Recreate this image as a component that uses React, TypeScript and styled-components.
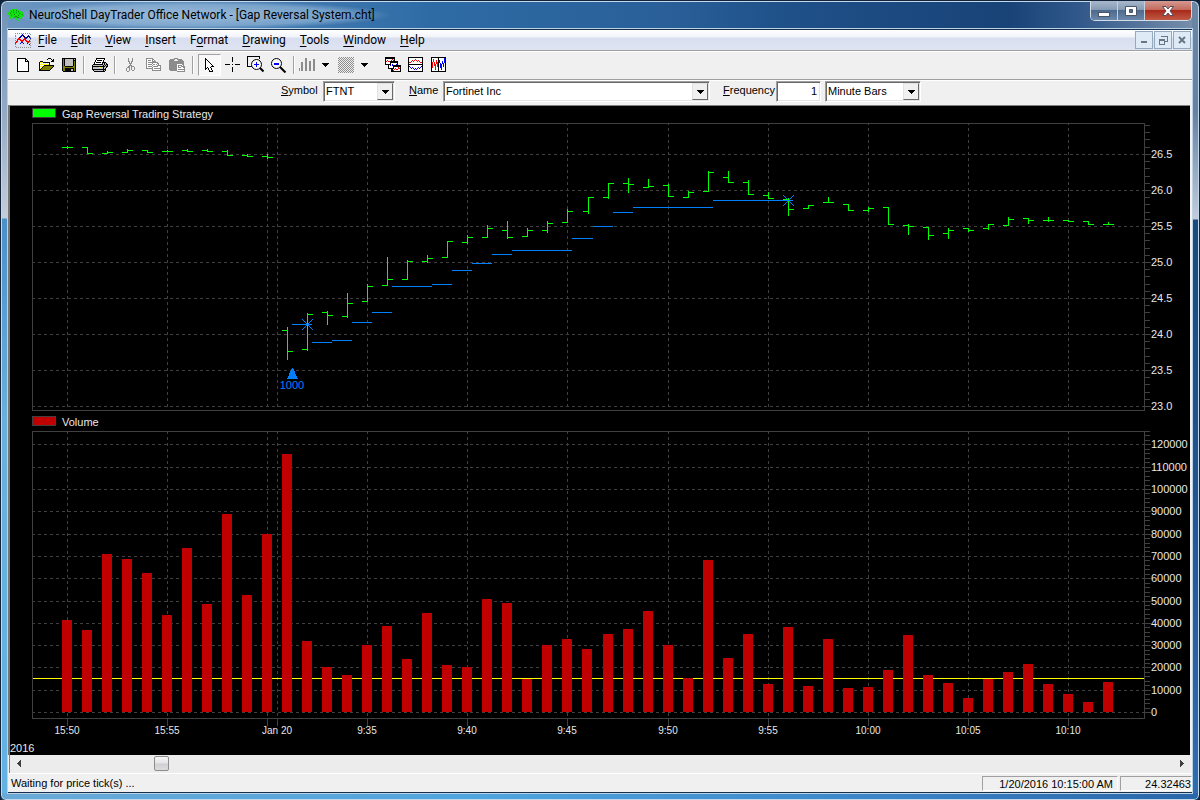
import React from "react";
import styled, { createGlobalStyle } from "styled-components";

const GlobalStyle = createGlobalStyle`
  * { box-sizing: border-box; }
  body { margin: 0; background: #10233c; font-family: "Liberation Sans", Arial, sans-serif; font-size: 11px; color: #000; }
  button, input, select { font: inherit; color: inherit; margin: 0; }
`;

/* ---------- window chrome ---------- */

const Frame = styled.div`
  min-height: 100vh;
  display: flex;
  flex-direction: column;
  padding: 0 7px 7px;
  border: 1px solid #14253b;
  border-radius: 7px 7px 6px 6px;
  box-shadow: inset 0 0 0 1px #c3d8ea;
  background:
    linear-gradient(90deg, #6aa9d6, #4fa5de 40%, #3a83c6 75%, #2a66a8) bottom / 100% 7px no-repeat,
    linear-gradient(180deg, #6f92b8 0, #93aac4 110px, #c3cdda 217px, #4a90c8 218px, #6ab0dc 420px, #62b2e2) left / 7px 100% no-repeat,
    linear-gradient(180deg, #6c86a5 0, #6580a2 110px, #c3cbd9 218px, #1b4a80 219px, #225390 480px, #2f6db0) right / 7px 100% no-repeat,
    linear-gradient(90deg, #6b96c0, #4a7fb4 20%, #2e6ba5 36%, #2a6099 55%, #1f5088 66%, #184377 84%, #31588a 90%, #7b91ac);
`;

const TitleBar = styled.header`
  display: flex;
  align-items: flex-start;
  justify-content: space-between;
  height: 28px;
`;

const TitleText = styled.div`
  display: flex;
  align-items: center;
  gap: 5px;
  height: 28px;
  padding-right: 16px;
  font: 12px/18px Roboto, "Noto Sans", sans-serif;
  background: radial-gradient(closest-side, rgba(205, 224, 240, 0.6), rgba(180, 208, 232, 0.45) 75%, rgba(180, 208, 232, 0));
`;

const CaptionButtons = styled.div`
  display: flex;
  height: 20px;
  border: 1px solid #d3dde8;
  border-top: 0;
  border-radius: 0 0 5px 5px;
  overflow: hidden;
`;

const CaptionButton = styled.button<{ $close?: boolean }>`
  display: flex;
  align-items: center;
  justify-content: center;
  width: ${(p) => (p.$close ? 46 : 27)}px;
  padding: 0;
  border: 0;
  border-right: ${(p) => (p.$close ? 0 : 1)}px solid #c4d0de;
  background: ${(p) =>
    p.$close
      ? "linear-gradient(#d49a90, #c4685a 48%, #a92a1c 50%, #c05a44)"
      : "linear-gradient(#a9b9cc, #8399b3 48%, #4e6a8c 50%, #6a86a8)"};
`;

const Client = styled.div`
  flex: 1;
  display: flex;
  flex-direction: column;
  border: 1px solid #16304e;
  border-width: 1px 0 1px 0;
  box-shadow: 0 0 0 1px #b9d2e6;
  background: #f0f0f0;
`;

/* ---------- menu ---------- */

const MenuBar = styled.nav`
  display: flex;
  align-items: center;
  height: 21px;
  padding: 0 1px 0 7px;
  border-bottom: 1px solid #a0a0a0;
  background: linear-gradient(#fff, #f1f4fa 35%, #d9def0 40%, #dfe4f3);
  font: 12px/18px Roboto, "Noto Sans", sans-serif;
`;

const MenuItem = styled.button`
  padding: 0 7px;
  border: 0;
  background: none;
  text-underline-offset: 2px;
`;

const MdiButtons = styled.div`
  display: flex;
  gap: 1px;
  margin-left: auto;
`;

const MdiButton = styled.button`
  display: flex;
  align-items: center;
  justify-content: center;
  width: 18px;
  height: 18px;
  padding: 0;
  border: 1px solid #94a9bd;
  background: #deebf7;
`;

/* ---------- toolbar ---------- */

const ToolBar = styled.div`
  display: flex;
  align-items: center;
  height: 29px;
  padding: 0 0 2px 3px;
  border-top: 1px solid #fff;
  border-bottom: 1px solid #a0a0a0;
`;

const ToolButton = styled.button<{ $pressed?: boolean; $width?: number }>`
  display: flex;
  align-items: center;
  justify-content: center;
  width: ${(p) => p.$width ?? 23}px;
  height: 22px;
  padding: 0;
  border: 1px solid transparent;
  border-color: ${(p) => (p.$pressed ? "#a0a0a0 #fff #fff #a0a0a0" : "transparent")};
  background: ${(p) => (p.$pressed ? "#f8f8f8" : "none")};
`;

const Separator = styled.span<{ $wide?: boolean }>`
  width: 2px;
  height: 18px;
  margin: 0 ${(p) => (p.$wide ? 4 : 3)}px;
  border-left: 1px solid #a0a0a0;
  border-right: 1px solid #fff;
`;

const Gap = styled.span`
  width: 10px;
`;

/* ---------- chart parameters ---------- */

const ParamBar = styled.form`
  display: flex;
  align-items: flex-start;
  height: 25px;
  padding-left: 273px;
  border-top: 1px solid #fff;
`;

const ParamLabel = styled.label<{ $width: number }>`
  width: ${(p) => p.$width}px;
  line-height: 19px;
  white-space: nowrap;
`;

const sunken = `
  border: 1px solid;
  border-color: #a0a0a0 #fff #fff #a0a0a0;
  box-shadow: inset 1px 1px 0 #696969, inset -1px -1px 0 #e3e3e3;
  background: #fff;
`;

const Combo = styled.span<{ $width: number; $after: number }>`
  position: relative;
  width: ${(p) => p.$width}px;
  height: 21px;
  margin-right: ${(p) => p.$after}px;
`;

const ComboSelect = styled.select`
  display: block;
  width: 100%;
  height: 100%;
  padding: 0 18px 2px 2px;
  appearance: none;
  border-radius: 0;
  outline: 0;
  ${sunken}
`;

const ComboArrow = styled.span`
  position: absolute;
  top: 2px;
  right: 2px;
  bottom: 2px;
  width: 16px;
  display: flex;
  align-items: center;
  justify-content: center;
  border: 1px solid;
  border-color: #e3e3e3 #696969 #696969 #e3e3e3;
  background: #f0f0f0;
  pointer-events: none;
`;

const NumberBox = styled.input`
  width: 45px;
  height: 21px;
  margin-right: 4px;
  padding: 0 3px 2px;
  text-align: right;
  border-radius: 0;
  outline: 0;
  ${sunken}
`;

/* ---------- chart ---------- */

const ChartArea = styled.main`
  flex: 1;
  border: solid #808080;
  border-width: 1px 0 0 2px;
  border-left-color: #767676;
  margin-right: 2px;
  background: #000;
  color: #e8e8e8;
`;

const Legend = styled.div`
  display: flex;
  align-items: center;
  gap: 6px;
  height: 14px;
  padding-left: 22px;
  line-height: 14px;
`;

const LegendText = styled.span`
  padding-top: 2px;
`;

const Swatch = styled.span<{ $color: string }>`
  width: 24px;
  height: 10px;
  border: 1px solid #404040;
  background: ${(p) => p.$color};
`;

const Plot = styled.svg`
  display: block;
  width: 100%;
  height: auto;
  font-family: "Liberation Sans", Arial, sans-serif;
  font-size: 11px;
`;

const YearRow = styled.div`
  height: 13px;
  line-height: 13px;
`;

/* ---------- bottom ---------- */

const ScrollBar = styled.div`
  display: flex;
  height: 18px;
  margin: 0 2px 0 1px;
  border-left: 1px solid #808080;
  background: #ececec;
`;

const ScrollButton = styled.button`
  display: flex;
  align-items: center;
  justify-content: center;
  width: 17px;
  height: 17px;
  padding: 0;
  border: 0;
  background: none;
`;

const ScrollRange = styled.input`
  flex: 1;
  min-width: 0;
  height: 17px;
  appearance: none;
  background: none;
  &::-webkit-slider-thumb {
    appearance: none;
    width: 15px;
    height: 15px;
    border: 1px solid #8c8c8c;
    border-radius: 2px;
    background: linear-gradient(#f6f6f6, #e4e4e6 48%, #cfd0d3 52%, #dcdcde);
  }
`;

const StatusBar = styled.footer`
  display: flex;
  align-items: center;
  height: 19px;
  padding-left: 3px;
  border-top: 1px solid #fff;
  line-height: 14px;
`;

const StatusMessage = styled.span`
  flex: 1;
`;

const StatusCell = styled.span<{ $width: number; $after: number; $pad: number }>`
  width: ${(p) => p.$width}px;
  height: 15px;
  margin-right: ${(p) => p.$after}px;
  padding-right: ${(p) => p.$pad}px;
  text-align: right;
  overflow: hidden;
  border: 1px solid;
  border-color: #a0a0a0 #fff #fff #a0a0a0;
`;

/* ---------- icons ---------- */

const INK: Record<string, string> = {
  K: "#000", W: "#fff", Y: "#ffff00", o: "#808000", G: "#c0c0c0", g: "#8c8c8c",
  R: "#ff0000", B: "#0000ff", N: "#000080", L: "#12e012", D: "#0a8a0a", d: "#404040",
};

/** Draws a small bitmap: one character per pixel, "." is transparent. */
const PixelIcon = ({ rows }: { rows: string[] }) => {
  const w = Math.max(...rows.map((r) => r.length));
  return (
    <svg width={w} height={rows.length} viewBox={`0 0 ${w} ${rows.length}`} shapeRendering="crispEdges" aria-hidden="true">
      {rows.flatMap((r, y) =>
        [...r].map((c, x) => (INK[c] ? <rect key={`${x}-${y}`} x={x} y={y} width="1" height="1" fill={INK[c]} /> : null)),
      )}
    </svg>
  );
};

const repeat = (row: string, n: number) => Array.from({ length: n }, () => row);

const NEW = ["KKKKKKKKK...", "KWWWWWWWKK..", "KWWWWWWWKWK.", "KWWWWWWWKKKK", ...repeat("KWWWWWWWWWWK", 9), "KKKKKKKKKKKK"];
const OPEN = [
  "..........KKK...", ".........K...K.K", "..............KK", "..KKK........KKK", ".KYWYKKKKKKK....", ".KWYWYWYWYWK....",
  ".KYWYWYWYWYK....", ".KWYWYKKKKKKKKKK", ".KYWYKoooooooooK", ".KWYKoooooooooK.", ".KYKoooooooooK..", ".KKoooooooooK...", ".KKKKKKKKKKK....",
];
const SAVE = [
  "KKKKKKKKKKKKKK", "KoKGGGGGGGGKGK", "KoKGGGGGGGGKKK", ...repeat("KoKGGGGGGGGKoK", 5), "KooKKKKKKKKooK", "KooooooooooooK",
  "KooKKKKKKKKKoK", ...repeat("KooKKKKKKGGKoK", 2), ".KKKKKKKKKKKKK",
];
const PRINT = [
  "....KKKKKKKKK...", "....KWWWWWWWK...", "...KWKKKKKWK....", "...KWWWWWWWK....", "..KWKKKKKWKKKK..", "..KWWWWWWWKGKGK.",
  ".KKKKKKKKKKGKGKK", "KGGGGGGGGGGKGKGK", "KKKKKKKKKKKKKGKK", "KGGGGGGYYYGKGGK.", "KGGGGGGGGGGKGK..", "KKKKKKKKKKKKKK..", ".KGGGGGGGGGKGK..", "..KKKKKKKKKKK...",
];
const CUT = [
  "..g...g...", "..g...g...", "..g...g...", "..gg.gg...", "...g.g....", "...ggg....", "....g.....", "...ggg....",
  "..gg.ggg..", ".ggg.g..g.", "g..g.g..g.", "g..g.g..g.", "g..g..gg..", ".gg.......",
];
const COPY = [
  "ggggggg.........", "gWWWWWgg........", "gWgggWgWg.......", "gWWWWWgggg......", "gWgggggggggg....", "gWWWWWgWWWWgg...", "gWggggWggWgWg...", "gWWWWWgWWWWgggg.",
  "gWggggWgggggWWg.", "gWWWWWgWWWWWWWg.", "gggggggWggggggg.", "......gWWWWWWWg.", "......ggggggggg.",
];
const PASTE = [
  ".....gggg.......", ".ggggg..ggggg...", "ggggg....ggggg..", "ggggggggggggggg.", "ggggggggggggggg.", "ggggggggggggggg.", "ggggggggWWWWWgg.", "ggggggggWggggWg.",
  "ggggggggWgWWgggg", "ggggggggWgggWWgg", "ggggggggWWWWWWWg", "ggggggggWggggggg", ".gggggggWWWWWWWg", "........gggggggg",
];
const POINTER = [
  "K........", "KK.......", "KWK......", "KWWK.....", "KWWWK....", "KWWWWK...", "KWWWWWK..", "KWWWWWWK.", "KWWWWWKKK", "KWKWWK...",
  "KK.KWWK..", "K..KWWK..", "....KWWK.", "....KKKK.",
];
const CROSS = [
  ...repeat(".......K.......", 5), ...repeat("...............", 2), "KKKKK..K..KKKKK", ...repeat("...............", 2), ...repeat(".......K.......", 5),
];
const BARS = [
  "......gg........", "......gg......gg", "......gg......gg", "......gg..gg..gg", "..gg..gg..gg..gg", "..gg..gg..gg..gg", "..gg..gg..gg..gg",
  "..gg..gg..gg..gg", "..gg..gg..gg..gg", "..gg..gg..gg..gg", "g.gg..gg..gg..gg", "g.gg..gg..gg..gg", "g.gg..gg..gg..gg",
];
const HATCH = Array.from({ length: 16 }, (_, i) => (i % 2 ? "g.g.g.g.g.g.g.g." : ".g.g.g.g.g.g.g.g"));
const ARROW = ["KKKKKKK", ".KKKKK.", "..KKK..", "...K..."];
const CASCADE = [
  "KKKKKKKKKK......", "KKKKKKKKKK......", "KWWWWWWRWK......", "KWRWWWRWRK......", "KRWRRKKKKKKKK...", "KWWWWKKKKKKKK...", "KWWWWKWWWWWWK...", "KKKKKKWBWWWBK...",
  "...KWBWBKKKKKKKK", "...KWWWWKKKKKKKK", "...KWWWWKWWWWRWK", "...KKKKKKWRWWRRK", "......KKWRWRRWWK", "......KKRWWWWWWK", "......KKKKKKKKKK",
];
const SPLIT_H = [
  "KKKKKKKKKKKKKKK", "KWWWWWWWWWWWWWK", "KWWWWWWRWWWWWWK", "KWWWRWRWRWRWWWK", "KWWRWRWWWRWRWWK", "KRRWWWWWWWWWRRK", "KWWWWWWWWWWWWWK", "KKKKKKKKKKKKKKK",
  "KWWWWWWWWWWWWWK", "KBWWWWWWWWWWWBK", "KWBWBWWWWWBWBWK", "KWWBWBWBWBWBWWK", "KWWWWWBWBWWWWWK", "KWWWWWWWWWWWWWK", "KKKKKKKKKKKKKKK",
];
const SPLIT_V = [
  "KKKKKKKKKKKKKKK", "KWWWWWWKWWWWWBK", "KWRWWWWKWWWWWBK", "KWRWWRWKBWWWWBK", "KWRWWRWKBWWBWBK", "KRWRWRRKBWWBWBK", "KRWRWRRKWBWBBWK", "KRWRRWRKWBBWBWK",
  "KRWRRWRKWBBWBWK", "KRWWRWRKWBBWBWK", "KRWWRWWKWBBWWWK", "KWWWRWWKWWBWWWK", "KWWWRWWKWWBWWWK", "KWWWWWWKWWWWWWK", "KKKKKKKKKKKKKKK",
];
const CHART_DOC = [
  "g.g.g.g.g.g.g.g.", ".......B.......g", "g.....BNB....N..", "g....BN.BN..NNN.", "....BN...NBNB.Bg", "g..RR....RNB...B", "..RRRR..RRR....g", "g.R..RRRR.RR..R.",
  ".RR...RR...RRRRg", "RR....BB....RR..", "R....B..B...B..g", "g.............B.", "...............g", "g...............", ".g.g.g.g.g.g.g.g",
];
const BRAIN = [
  "....LLLLLL......", "..LLLDLLDLLL....", ".LLDLLLLLLDLLL..", "LLLLLDLLDLLLLLL.", "LLDLLLLLLLLDLLL.", "LLLLLLDLLLLLLLDL", ".LLDLLLLLLDLLLLL", "..LLLLLDDLLLLLL.",
  "..LLL.DLLDDLLL..", "..LL...LLL.LLL..", "........LL......", ".........LL.....",
];
const LEFT = ["...d", "..dd", ".ddd", "dddd", ".ddd", "..dd", "...d"];
const RIGHT = ["d...", "dd..", "ddd.", "dddd", "ddd.", "dd..", "d..."];

const Magnifier = ({ plus }: { plus?: boolean }) => (
  <svg width="17" height="17" viewBox="0 0 17 17" fill="none" stroke="#000" aria-hidden="true">
    {plus && <path d="M5 10.5H0.5V0.5H12.5V3" shapeRendering="crispEdges" />}
    <circle cx={plus ? 9.5 : 6.5} cy={plus ? 8.5 : 7.5} r="5" fill="#f8f8f8" />
    <path d={plus ? "M13 12L16.500 15.500" : "M10 11L15.500 16.500"} strokeWidth="2" />
    <path d={plus ? "M7 8.500H12M9.500 6V11" : "M4 7.500H9"} stroke="#00f" strokeWidth={plus ? 1 : 2} shapeRendering="crispEdges" />
  </svg>
);

/* ---------- data ---------- */

const TIMES = [
  { slot: 0, text: "15:50" }, { slot: 5, text: "15:55" }, { slot: 15, text: "9:35" }, { slot: 20, text: "9:40" }, { slot: 25, text: "9:45" },
  { slot: 30, text: "9:50" }, { slot: 35, text: "9:55" }, { slot: 40, text: "10:00" }, { slot: 45, text: "10:05" }, { slot: 50, text: "10:10" },
];
const slotX = (i: number) => 67 + 20 * i + (i > 25 ? 1 : 0);
const GRID_X = [...TIMES.map((t) => slotX(t.slot)), 267, 277];

/* open, high, low, close of each minute, as rows of the plot */
const PRICES: number[][] = [
  [147, 146, 148, 147], [147, 147, 153, 153], [153, 151, 153, 152], [152, 149, 151, 150], [150, 150, 152, 152], [151, 150, 151, 151],
  [150, 149, 150, 151], [150, 149, 150, 151], [151, 150, 155, 155], [155, 154, 155, 156], [156, 154, 158, 157], [330, 327, 359, 351],
  [349, 313, 350, 314], [312, 311, 324, 315], [316, 293, 317, 303], [301, 284, 300, 286], [285, 257, 285, 279], [279, 260, 278, 261],
  [261, 255, 262, 258], [257, 241, 257, 241], [242, 235, 243, 237], [237, 225, 237, 228], [230, 221, 238, 237], [236, 228, 235, 230],
  [230, 221, 232, 223], [222, 209, 221, 211], [211, 197, 213, 197], [197, 183, 198, 183], [183, 178, 192, 184], [187, 179, 187, 186],
  [185, 184, 196, 196], [197, 191, 196, 192], [191, 171, 190, 172], [177, 171, 182, 182], [182, 180, 193, 194], [195, 192, 197, 198],
  [199, 198, 215, 209], [208, 205, 208, 205], [202, 197, 202, 202], [204, 204, 209, 210], [210, 207, 211, 208], [207, 207, 223, 224],
  [225, 224, 234, 226], [227, 227, 239, 235], [233, 228, 238, 230], [228, 228, 231, 230], [228, 224, 229, 224], [225, 217, 225, 219],
  [218, 218, 223, 220], [220, 217, 221, 220], [220, 220, 221, 221], [221, 221, 223, 224], [224, 222, 224, 224],
];

/* trailing stop: from, to, row */
const STOPS: number[][] = [
  [292, 312, 324], [312, 332, 342], [332, 352, 340], [352, 372, 322], [372, 392, 312], [392, 432, 286], [432, 452, 284], [452, 472, 270],
  [472, 492, 263], [492, 512, 254], [512, 572, 250], [572, 593, 238], [593, 613, 226], [613, 633, 212], [633, 713, 207], [713, 793, 200],
];

const VOLUME_TOPS = [
  620, 630, 554, 559, 573, 615, 548, 604, 514, 595, 534, 454, 641, 667, 675, 645, 626, 659, 613, 665, 667, 599, 603, 679, 645, 639, 649,
  634, 629, 611, 645, 678, 560, 658, 634, 684, 627, 686, 639, 688, 687, 670, 635, 675, 683, 698, 679, 672, 664, 684, 694, 702, 682,
];

const GRID = "#404040";

const GridLines = ({ rows, top, bottom, phase }: { rows: number[]; top: number; bottom: number; phase: number }) => (
  <g stroke={GRID} fill="none">
    <g strokeDasharray="3 3">
      {rows.map((y) => <path key={y} d={`M32 ${y + 0.5}H1144`} />)}
      {GRID_X.map((x) => <path key={x} d={`M${x + 0.5} ${top}V${bottom}`} strokeDashoffset={phase} />)}
    </g>
    <rect x="32.5" y={top + 0.5} width="1112" height={bottom - top} />
  </g>
);

const PricePlot = () => (
  <Plot viewBox="10 120 1180 294" role="img" aria-label="Gap Reversal Trading Strategy">
    <g shapeRendering="crispEdges">
      <GridLines rows={[154, 190, 226, 262, 298, 334, 370, 406]} top={123} bottom={410} phase={1} />
      <g stroke={GRID}>
        {Array.from({ length: 40 }, (_, i) => (
          <path key={i} d={`M1145 ${Math.floor(406 - i * 7.2 + 0.4) + 0.5}h${i % 5 ? 5 : 6}`} />
        )).slice(0, 40)}
      </g>
      <g stroke="#00ff00">
        {PRICES.map(([o, h, l, c], i) => {
          const x = slotX(i);
          return <path key={i} d={`M${x - 5} ${o + 0.5}H${x + 1}M${x + 0.5} ${h}V${l + 1}M${x} ${c + 0.5}H${x + 6}`} />;
        })}
      </g>
      <g stroke="#0080ff">
        {STOPS.map(([a, b, y]) => <path key={a} d={`M${a} ${y + 0.5}H${b}`} />)}
        {[[307, 324], [788, 200]].map(([x, y]) => (
          <path key={x} d={`M${x - 5} ${y - 5}L${x + 6} ${y + 6}M${x + 6} ${y - 5}L${x - 5} ${y + 6}M${x - 2} ${y + 0.5}H${x + 3}`} />
        ))}
      </g>
      <path d="M292 368h1l5 11h-11z" fill="#0080ff" />
    </g>
    <text x="292" y="389" textAnchor="middle" fill="#0080ff">1000</text>
    <g fill="#e8e8e8">
      {["26.5", "26.0", "25.5", "25.0", "24.5", "24.0", "23.5", "23.0"].map((t, i) => (
        <text key={t} x="1151" y={158 + i * 36}>{t}</text>
      ))}
    </g>
  </Plot>
);

const volumeY = (v: number) => Math.round(712.05 - (v * 267.7) / 120000);
const VOLUME_STEPS = Array.from({ length: 13 }, (_, i) => i * 10000);

const VolumePlot = () => (
  <Plot viewBox="10 428 1180 314" role="img" aria-label="Volume">
    <g shapeRendering="crispEdges">
      <GridLines rows={VOLUME_STEPS.map(volumeY)} top={431} bottom={718} phase={0} />
      <g stroke={GRID}>
        {Array.from({ length: 64 }, (_, i) => (
          <path key={i} d={`M1145 ${volumeY(i * 2000) + 0.5}h${i % 5 ? 5 : 6}`} />
        ))}
        {GRID_X.map((x) => <path key={x} d={`M${x + 0.5} 718V726`} />)}
      </g>
      <path d="M33 678.500H1144" stroke="#ffff00" />
      <g fill="#c00000">
        {VOLUME_TOPS.map((y, i) => <rect key={i} x={62 + 20 * i + (i > 26 ? 1 : 0)} y={y} width="10" height={712 - y} />)}
      </g>
    </g>
    <g fill="#e8e8e8">
      {VOLUME_STEPS.map((v) => <text key={v} x="1151" y={volumeY(v) + 4}>{v}</text>)}
    </g>
    <g fill="#e8e8e8" fontSize="10" textAnchor="middle">
      {TIMES.map((t) => <text key={t.text} x={slotX(t.slot)} y="734">{t.text}</text>)}
      <text x="277" y="734">Jan 20</text>
    </g>
  </Plot>
);

/* ---------- composition ---------- */

const MENU = [["", "F", "ile"], ["", "E", "dit"], ["", "V", "iew"], ["", "I", "nsert"], ["F", "o", "rmat"], ["", "D", "rawing"], ["", "T", "ools"], ["", "W", "indow"], ["", "H", "elp"]];

const Tool = ({ name, rows, width, pressed }: { name: string; rows: string[]; width?: number; pressed?: boolean }) => (
  <ToolButton type="button" aria-label={name} $width={width} $pressed={pressed}><PixelIcon rows={rows} /></ToolButton>
);

const Dropdown = ({ id, value, width, after, label }: { id: string; value: string; width: number; after: number; label?: string }) => (
  <Combo $width={width} $after={after}>
    <ComboSelect id={id} aria-label={label} defaultValue={value}><option>{value}</option></ComboSelect>
    <ComboArrow><PixelIcon rows={ARROW} /></ComboArrow>
  </Combo>
);

export default function App() {
  return (
    <>
      <GlobalStyle />
      <Frame>
        <TitleBar>
          <TitleText><PixelIcon rows={BRAIN} />NeuroShell DayTrader Office Network - [Gap Reversal System.cht]</TitleText>
          <CaptionButtons>
            <CaptionButton type="button" aria-label="Minimize">
              <svg width="14" height="14" aria-hidden="true"><rect x="1.500" y="8.500" width="11" height="4" fill="#fff" stroke="#4b566a" /></svg>
            </CaptionButton>
            <CaptionButton type="button" aria-label="Maximize">
              <svg width="14" height="12" aria-hidden="true"><path d="M1.500 1.500h11v9h-11zM5.500 4.500v3h3v-3z" fill="#fff" fillRule="evenodd" stroke="#4b566a" /></svg>
            </CaptionButton>
            <CaptionButton type="button" aria-label="Close" $close>
              <svg width="14" height="12" aria-hidden="true">
                <path d="M1.500 1.500h3.500l2 2.500 2-2.500h3.500l-3.500 4.500 3.500 4.500h-3.500l-2-2.500-2 2.500h-3.500l3.500-4.500z" fill="#fff" stroke="#5a4a58" />
              </svg>
            </CaptionButton>
          </CaptionButtons>
        </TitleBar>
        <Client>
          <MenuBar>
            <PixelIcon rows={CHART_DOC} />
            {MENU.map(([pre, key, post]) => <MenuItem key={key + post} type="button">{pre}<u>{key}</u>{post}</MenuItem>)}
            <MdiButtons>
              <MdiButton type="button" aria-label="Minimize chart"><svg width="8" height="8" aria-hidden="true"><path d="M1 6h6" stroke="#667788" strokeWidth="2" /></svg></MdiButton>
              <MdiButton type="button" aria-label="Restore chart">
                <svg width="10" height="10" fill="none" stroke="#667788" shapeRendering="crispEdges" aria-hidden="true"><path d="M3 2V1H9V6H7M1 4H6V9H1zM1 5H6M3 1.500H9" /></svg>
              </MdiButton>
              <MdiButton type="button" aria-label="Close chart"><svg width="8" height="8" aria-hidden="true"><path d="M1 1L7 7M7 1L1 7" stroke="#667788" strokeWidth="2" /></svg></MdiButton>
            </MdiButtons>
          </MenuBar>
          <ToolBar>
            <Tool name="New" rows={NEW} />
            <Tool name="Open" rows={OPEN} />
            <Tool name="Save" rows={SAVE} />
            <Separator />
            <Tool name="Print" rows={PRINT} />
            <Separator />
            <Tool name="Cut" rows={CUT} />
            <Tool name="Copy" rows={COPY} />
            <Tool name="Paste" rows={PASTE} />
            <Separator $wide />
            <Tool name="Pointer" rows={POINTER} pressed />
            <Tool name="Crosshair" rows={CROSS} />
            <ToolButton type="button" aria-label="Zoom in"><Magnifier plus /></ToolButton>
            <ToolButton type="button" aria-label="Zoom out"><Magnifier /></ToolButton>
            <Separator />
            <Tool name="Bar style" rows={BARS} width={18} />
            <Tool name="Bar style menu" rows={ARROW} width={18} />
            <Tool name="Pattern" rows={HATCH} />
            <Tool name="Pattern menu" rows={ARROW} width={14} />
            <Gap />
            <Tool name="Cascade" rows={CASCADE} />
            <Tool name="Tile rows" rows={SPLIT_H} />
            <Tool name="Tile columns" rows={SPLIT_V} />
          </ToolBar>
          <ParamBar>
            <ParamLabel htmlFor="symbol" $width={42}><u>S</u>ymbol</ParamLabel>
            <Dropdown id="symbol" value="FTNT" width={72} after={14} />
            <ParamLabel htmlFor="name" $width={34}><u>N</u>ame</ParamLabel>
            <Dropdown id="name" value="Fortinet Inc" width={267} after={13} />
            <ParamLabel htmlFor="frequency" $width={53}><u>F</u>requency</ParamLabel>
            <NumberBox id="frequency" defaultValue="1" />
            <Dropdown id="unit" label="Frequency unit" value="Minute Bars" width={96} after={0} />
          </ParamBar>
          <ChartArea>
            <Legend><Swatch $color="#00ff00" /><LegendText>Gap Reversal Trading Strategy</LegendText></Legend>
            <PricePlot />
            <Legend><Swatch $color="#c00000" /><LegendText>Volume</LegendText></Legend>
            <VolumePlot />
            <YearRow>2016</YearRow>
          </ChartArea>
          <ScrollBar>
            <ScrollButton type="button" aria-label="Scroll left"><PixelIcon rows={LEFT} /></ScrollButton>
            <ScrollRange type="range" aria-label="Chart position" min="0" max="1000" defaultValue="112" />
            <ScrollButton type="button" aria-label="Scroll right"><PixelIcon rows={RIGHT} /></ScrollButton>
          </ScrollBar>
          <StatusBar>
            <StatusMessage>Waiting for price tick(s) ...</StatusMessage>
            <StatusCell $width={136} $after={2} $pad={4}>1/20/2016 10:15:00 AM</StatusCell>
            <StatusCell $width={72} $after={0} $pad={0}>24.32463</StatusCell>
          </StatusBar>
        </Client>
      </Frame>
    </>
  );
}
